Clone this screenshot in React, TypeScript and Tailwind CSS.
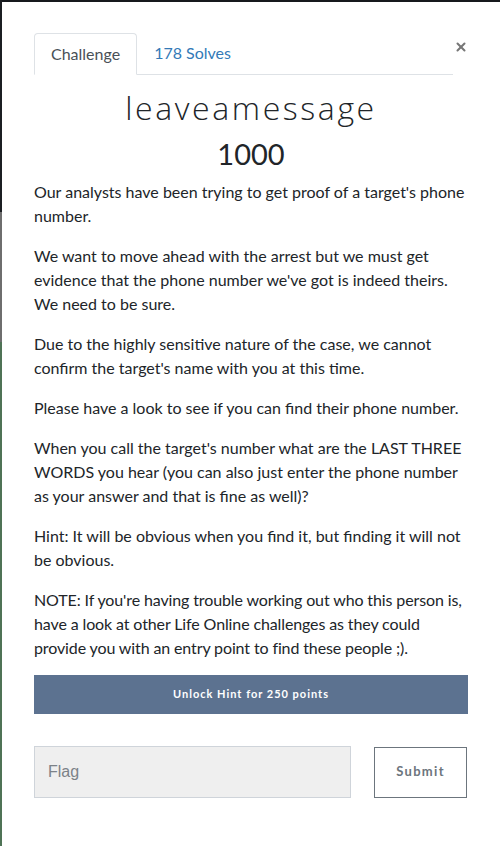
import { X } from "lucide-react";

const paragraphs = [
  "Our analysts have been trying to get proof of a target's phone number.",
  "We want to move ahead with the arrest but we must get evidence that the phone number we've got is indeed theirs. We need to be sure.",
  "Due to the highly sensitive nature of the case, we cannot confirm the target's name with you at this time.",
  "Please have a look to see if you can find their phone number.",
  "When you call the target's number what are the LAST THREE WORDS you hear (you can also just enter the phone number as your answer and that is fine as well)?",
  "Hint: It will be obvious when you find it, but finding it will not be obvious.",
];

export default function App() {
  return (
    <div className="flex min-h-[846px] w-[500px] overflow-hidden bg-[#16191d]">
      {/* backdrop peeking through at the left edge */}
      <div className="flex w-[2px] flex-col">
        <div className="h-[212px] bg-[#1b1e22]" />
        <div className="h-[130px] bg-[#6e6e6e]" />
        <div className="flex-1 bg-[#4f7356]" />
      </div>

      <div className="mt-[2px] flex-1 bg-white px-8 pt-[31px] font-['Lato',sans-serif] text-[#212529]">
        <div className="flex items-start">
          <div className="flex flex-1 border-b border-[#dee2e6] text-[16px]">
            <div className="-mb-px rounded-t border border-b-white border-[#dee2e6] bg-white px-[16px] py-[8px] text-[#495057]">
              Challenge
            </div>
            <div className="px-[17px] py-[8px] text-[#337ab7]">178 Solves</div>
          </div>
          <button className="ml-[1px] mt-[7px] text-[#777]">
            <X className="h-[14px] w-[14px]" strokeWidth={3.5} />
          </button>
        </div>

        <h2 className="mt-[11px] text-center font-['Open_Sans',sans-serif] text-[32px] font-light leading-[44px] tracking-[2.6px] text-[#212529]">
          leaveamessage
        </h2>
        <h3 className="mt-[7px] text-center text-[29px] leading-[34px]">1000</h3>

        <div className="mt-[9px] text-[16px] leading-[24px]">
          {paragraphs.map((p) => (
            <p key={p} className="mb-4">
              {p}
            </p>
          ))}
          <p className="mb-[15px] tracking-[-0.12px]">
            NOTE: If you're having trouble working out who this person is,
            have a look at other Life Online challenges as they could provide
            you with an entry point to find these people ;).
          </p>
        </div>

        <button className="h-[39px] w-full bg-[#5c7290] text-[11px] font-bold tracking-[1px] text-white">
          Unlock Hint for 250 points
        </button>

        <div className="mt-[32px] flex items-center gap-[23px] pr-[1px]">
          <input
            placeholder="Flag"
            className="h-[52px] flex-1 border border-[#cfd4da] bg-[#efefef] px-[13px] font-['Liberation_Sans',sans-serif] text-[16px] placeholder:text-[#7c8288] outline-none"
          />
          <button className="h-[51px] w-[93px] border border-[#6c757d] bg-white text-[13px] font-bold tracking-[1.3px] text-[#6c757d]">
            Submit
          </button>
        </div>
      </div>
    </div>
  );
}
